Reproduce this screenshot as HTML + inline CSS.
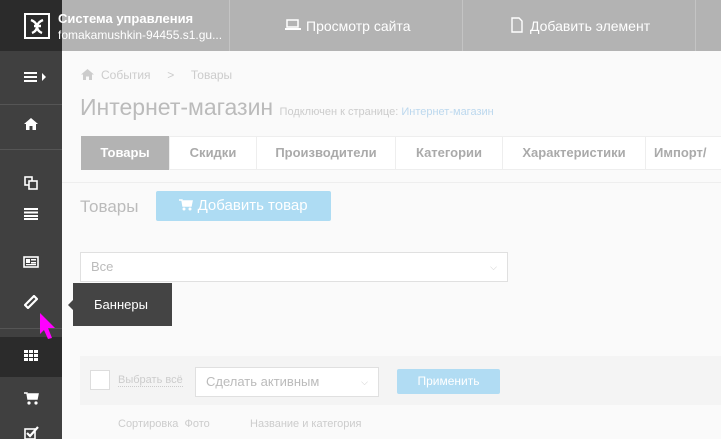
<!DOCTYPE html>
<html><head><meta charset="utf-8"><style>
*{margin:0;padding:0;box-sizing:border-box}
body{width:721px;height:439px;overflow:hidden;background:#fafafa;font-family:"Liberation Sans","DejaVu Sans",sans-serif;position:relative}
.a{position:absolute}
.sb{left:0;top:0;width:62px;height:439px;background:#404040}
.top{left:62px;top:0;width:659px;height:51px;background:#b3b3b3}
.sep{top:0;width:1px;height:51px;background:#c4c4c4}
.tt{color:#fff;font-size:14px}
.ln{left:0;width:62px;height:1px;background:#555}
.tab{top:136px;height:34px;background:#fff;border:1px solid #eee;color:#aaa;font-weight:bold;font-size:13px;line-height:32px;text-align:center}
</style></head><body>
<div class="a sb"></div>
<div class="a" style="left:0;top:0;width:62px;height:51px;background:#2b2b2b"></div>
<svg class="a" style="left:24px;top:13px" width="26" height="26"><rect x="1" y="1" width="24" height="24" fill="none" stroke="#fff" stroke-width="2"/><path d="M7 7Q12 9 13 13Q13 18 8 20M19 7Q14 9 13 13Q13 18 18 20M10 13H17" fill="none" stroke="#fff" stroke-width="2.4"/></svg>
<div class="a top"></div>
<div class="a" style="left:58px;top:11px;color:#fff;font-size:13px;font-weight:bold">Система управления</div>
<div class="a" style="left:58px;top:28px;color:#fff;font-size:12px">fomakamushkin-94455.s1.gu...</div>
<div class="a sep" style="left:229px"></div>
<div class="a sep" style="left:462px"></div>
<div class="a sep" style="left:695px"></div>
<svg class="a" style="left:285px;top:19px" width="16" height="12"><rect x="2" y="1" width="11" height="7" fill="none" stroke="#fff" stroke-width="1.5"/><rect x="0" y="9" width="16" height="2" fill="#fff"/></svg>
<div class="a tt" style="left:306px;top:18px">Просмотр сайта</div>
<svg class="a" style="left:511px;top:17px" width="12" height="16"><path d="M1 1H8L11 4V15H1Z" fill="none" stroke="#fff" stroke-width="1.4"/></svg>
<div class="a tt" style="left:530px;top:18px">Добавить элемент</div>
<!-- sidebar icons -->
<svg class="a" style="left:24px;top:72px" width="24" height="11"><g fill="#fff"><rect x="0" y="0" width="13" height="2"/><rect x="0" y="4" width="13" height="2"/><rect x="0" y="8" width="13" height="2"/><path d="M18 1L22 5L18 9Z"/></g></svg>
<div class="a ln" style="top:104px"></div>
<svg class="a" style="left:24px;top:118px" width="14" height="12"><path d="M7 0L14 6H12V12H8.5V8H5.5V12H2V6H0Z" fill="#fff"/></svg>
<div class="a ln" style="top:149px"></div>
<svg class="a" style="left:24px;top:176px" width="14" height="14"><rect x="1" y="1" width="7" height="8" fill="none" stroke="#fff" stroke-width="1.6"/><rect x="5" y="5" width="8" height="8" fill="#404040" stroke="#fff" stroke-width="1.6"/></svg>
<svg class="a" style="left:24px;top:208px" width="14" height="12"><g fill="#fff"><rect x="0" y="0" width="14" height="2"/><rect x="0" y="3.5" width="14" height="2"/><rect x="0" y="7" width="14" height="2"/><rect x="0" y="10" width="14" height="2"/></g></svg>
<svg class="a" style="left:23px;top:256px" width="16" height="12"><rect x="1" y="1" width="14" height="10" fill="none" stroke="#fff" stroke-width="1.6"/><rect x="3" y="3" width="4" height="4" fill="#fff"/><rect x="8" y="3" width="5" height="1.5" fill="#fff"/><rect x="8" y="6" width="5" height="1.5" fill="#fff"/><rect x="3" y="8" width="10" height="1.2" fill="#fff"/></svg>
<svg class="a" style="left:24px;top:295px" width="14" height="14"><path d="M4 13L1 10L10 1L13 4Z" fill="none" stroke="#fff" stroke-width="2.2"/></svg>
<div class="a ln" style="top:328px"></div>
<div class="a" style="left:0;top:337px;width:62px;height:40px;background:#2b2b2b"></div>
<svg class="a" style="left:24px;top:350px" width="15" height="12"><g fill="#fff"><rect x="0" y="0" width="4" height="3"/><rect x="5" y="0" width="4" height="3"/><rect x="10" y="0" width="4" height="3"/><rect x="0" y="4" width="4" height="3"/><rect x="5" y="4" width="4" height="3"/><rect x="10" y="4" width="4" height="3"/><rect x="0" y="8" width="4" height="3"/><rect x="5" y="8" width="4" height="3"/><rect x="10" y="8" width="4" height="3"/></g></svg>
<svg class="a" style="left:24px;top:392px" width="15" height="13"><path d="M0 1H3L4 7H13L14 2H4" fill="#fff" stroke="#fff" stroke-width="1.5"/><circle cx="5" cy="11" r="1.6" fill="#fff"/><circle cx="12" cy="11" r="1.6" fill="#fff"/></svg>
<svg class="a" style="left:24px;top:426px" width="15" height="13"><rect x="1" y="3" width="10" height="10" fill="none" stroke="#fff" stroke-width="1.6"/><path d="M3 7L6 10L14 1" fill="none" stroke="#fff" stroke-width="2.2"/></svg>
<svg class="a" style="left:38px;top:312px" width="20" height="28"><path d="M2 1L17 16H10L14 26L10 27L6 18L2 22Z" fill="#f0f"/></svg>
<!-- content -->
<svg class="a" style="left:81px;top:69px" width="13" height="11"><path d="M6.5 0L13 5.5H11V11H8V7.5H5V11H2V5.5H0Z" fill="#ccc"/></svg>
<div class="a" style="left:101px;top:68px;font-size:12px;color:#ccc">События &nbsp;&nbsp;&nbsp;&nbsp;&gt;&nbsp;&nbsp;&nbsp;&nbsp; Товары</div>
<div class="a" style="left:80px;top:94px;font-size:23px;color:#bbb">Интернет-магазин <span style="font-size:11px;color:#ccc">Подключен к странице: <span style="color:#bcd8ee">Интернет-магазин</span></span></div>
<div class="a tab" style="left:81px;width:88px;background:#b3b3b3;color:#fff;border-color:#b3b3b3">Товары</div>
<div class="a tab" style="left:169px;width:88px">Скидки</div>
<div class="a tab" style="left:256px;width:140px">Производители</div>
<div class="a tab" style="left:395px;width:108px">Категории</div>
<div class="a tab" style="left:502px;width:144px">Характеристики</div>
<div class="a tab" style="left:645px;width:90px;text-align:left;padding-left:8px">Импорт/</div>
<div class="a" style="left:62px;top:182px;width:659px;height:1px;background:#eee"></div>
<div class="a" style="left:80px;top:197px;font-size:17px;color:#bbb">Товары</div>
<div class="a" style="left:156px;top:191px;width:175px;height:30px;background:#aedcf3;border-radius:2px;color:#fff;font-size:15px;line-height:30px;text-align:center"><svg width="14" height="12" style="vertical-align:-1px"><path d="M0 1H3L4 7H12L13 2H4" fill="#fff" stroke="#fff" stroke-width="1.5"/><circle cx="5" cy="10" r="1.5" fill="#fff"/><circle cx="11" cy="10" r="1.5" fill="#fff"/></svg> Добавить товар</div>
<div class="a" style="left:80px;top:252px;width:428px;height:30px;background:#fff;border:1px solid #e0e0e0;color:#bbb;font-size:13px;line-height:28px;padding-left:10px">Все<span style="position:absolute;right:10px;color:#ccc;font-size:9px">⌵</span></div>
<div class="a" style="left:73px;top:283px;width:99px;height:43px;background:#444;color:#fff;font-size:13px;line-height:43px;padding-left:21px">Баннеры</div>
<div class="a" style="left:68px;top:300px;width:0;height:0;border:5px solid transparent;border-right-color:#444;border-left:0"></div>
<div class="a" style="left:80px;top:356px;width:641px;height:49px;background:#f4f4f4"></div>
<div class="a" style="left:90px;top:370px;width:20px;height:20px;background:#fff;border:1px solid #ddd"></div>
<div class="a" style="left:118px;top:374px;font-size:11px;color:#ccc;border-bottom:1px dotted #ccc">Выбрать всё</div>
<div class="a" style="left:195px;top:367px;width:184px;height:30px;background:#fff;border:1px solid #e0e0e0;color:#bbb;font-size:13px;line-height:28px;padding-left:10px">Сделать активным<span style="position:absolute;right:10px;color:#ccc;font-size:9px">⌵</span></div>
<div class="a" style="left:397px;top:369px;width:103px;height:25px;background:#b1dcf3;border-radius:2px;color:#fff;font-size:12px;line-height:25px;text-align:center">Применить</div>
<div class="a" style="left:118px;top:418px;font-size:11px;color:#ccc">Сортировка&nbsp; Фото</div>
<div class="a" style="left:250px;top:418px;font-size:11px;color:#ccc">Название и категория</div>
</body></html>
